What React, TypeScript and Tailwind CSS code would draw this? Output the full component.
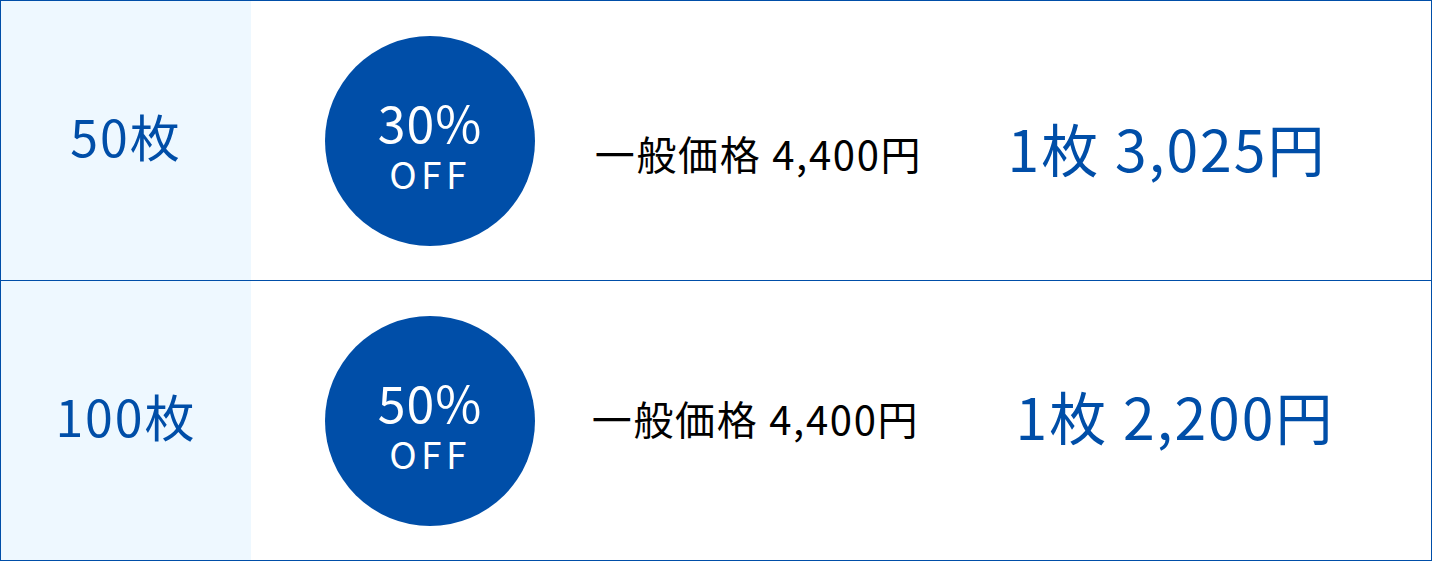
import React from "react";

const plans = [
  {
    qty: "50枚",
    off: "30%",
    price: "1枚 3,025円",
    midClass: "w-[447px] pt-[24px]",
    priceClass: "w-[370px] pt-[14px]",
  },
  {
    qty: "100枚",
    off: "50%",
    price: "1枚 2,200円",
    midClass: "w-[441px] pb-[6px]",
    priceClass: "w-[398px] pb-[10px]",
  },
];

export default function App() {
  return (
    <div
      className="w-[1432px] h-[561px] bg-white border border-[#004ea8] flex flex-col"
      style={{ fontFamily: '"Noto Sans CJK JP", "Noto Sans", sans-serif' }}
    >
      {plans.map((p, i) => (
        <div
          key={p.qty}
          className={
            i === 0
              ? "flex h-[280px] border-b border-[#004ea8]"
              : "flex h-[279px]"
          }
        >
          {/* quantity */}
          <div className="w-[250px] shrink-0 bg-[#eef8ff] flex items-center justify-center pb-[12px]">
            <span className="text-[50px] leading-none tracking-[2px] text-[#004ea8]">
              {p.qty}
            </span>
          </div>

          {/* discount badge */}
          <div className="pl-[74px] flex items-center">
            <div className="w-[210px] h-[210px] rounded-full bg-[#004ea8] flex flex-col items-center justify-center gap-[9px] pt-[7px] text-white">
              <span className="text-[50px] leading-none tracking-[1px]">{p.off}</span>
              <span className="text-[37px] leading-none tracking-[0.12em]">OFF</span>
            </div>
          </div>

          {/* regular price */}
          <div className={p.midClass + " flex items-center justify-center"}>
            <span className="text-[40px] leading-none tracking-[1.7px] text-black">
              一般価格 4,400円
            </span>
          </div>

          {/* discounted price */}
          <div className={p.priceClass + " flex items-center justify-center"}>
            <span className="text-[57px] leading-none tracking-[2px] text-[#004ea8]">
              {p.price}
            </span>
          </div>
        </div>
      ))}
    </div>
  );
}
